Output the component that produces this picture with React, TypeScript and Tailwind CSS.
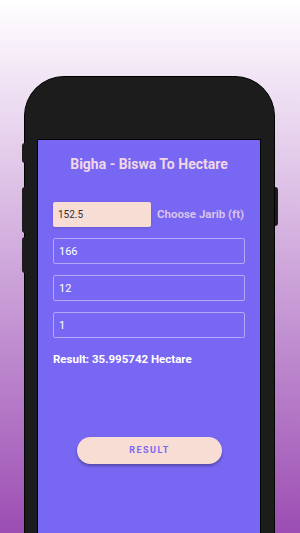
import React, { useState } from "react";

const App: React.FC = () => {
  const [jarib, setJarib] = useState("152.5");
  const [bigha, setBigha] = useState("166");
  const [biswa, setBiswa] = useState("12");
  const [biswansi, setBiswansi] = useState("1");

  return (
    <div
      className="w-[300px] h-[533px] overflow-hidden bg-gradient-to-b from-[#ffffff] to-[#9c4db3]"
      style={{ fontFamily: "Roboto, 'Liberation Sans', sans-serif" }}
    >
      <div className="relative ml-[24px] mt-[76px] w-[251px] h-[500px] rounded-t-[40px] bg-[#1c1c1c] border border-black pt-[62px] pl-[12px] pr-[13px]">
        {/* side buttons */}
        <div className="absolute left-[-3px] top-[66px] w-[3px] h-[20px] bg-[#1c1c1c] rounded-l-sm" />
        <div className="absolute left-[-3px] top-[110px] w-[3px] h-[46px] bg-[#1c1c1c] rounded-l-sm" />
        <div className="absolute left-[-3px] top-[160px] w-[3px] h-[36px] bg-[#1c1c1c] rounded-l-sm" />
        <div className="absolute right-[-4px] top-[110px] w-[3px] h-[39px] bg-[#1c1c1c] rounded-r-sm" />

        <div className="h-full bg-[#7867f2] border-t border-x border-black flex flex-col px-[15px]">
          <h1 className="mt-[14px] text-center text-[14px] font-bold text-[#f1d8e6]">
            Bigha - Biswa To Hectare
          </h1>

          <div className="mt-[27px] flex items-center gap-[6px]">
            <input
              value={jarib}
              onChange={(e) => setJarib(e.target.value)}
              className="w-[98px] h-[25px] shrink-0 rounded-[2px] bg-[#f8ddd5] px-[5px] text-[10px] text-[#333] outline-none shadow-sm"
            />
            <span className="whitespace-nowrap text-[11.5px] font-bold text-[#d9c3ec]">Choose Jarib (ft)</span>
          </div>

          <input
            value={bigha}
            onChange={(e) => setBigha(e.target.value)}
            className="mt-[11px] h-[26px] w-[192px] rounded-[2px] border border-[#b5a8f8] bg-transparent px-[5px] text-[11px] text-white outline-none"
          />
          <input
            value={biswa}
            onChange={(e) => setBiswa(e.target.value)}
            className="mt-[11px] h-[26px] w-[192px] rounded-[2px] border border-[#b5a8f8] bg-transparent px-[5px] text-[11px] text-white outline-none"
          />
          <input
            value={biswansi}
            onChange={(e) => setBiswansi(e.target.value)}
            className="mt-[11px] h-[26px] w-[192px] rounded-[2px] border border-[#b5a8f8] bg-transparent px-[5px] text-[11px] text-white outline-none"
          />

          <p className="mt-[13px] text-[11.5px] font-bold text-white">Result: 35.995742 Hectare</p>

          <button className="mt-[69px] ml-[24px] w-[145px] h-[27px] rounded-full bg-[#f8ddd5] text-[9px] font-bold tracking-[1.5px] text-[#7867f2] shadow-[0_2px_3px_rgba(0,0,0,0.3)]">
            RESULT
          </button>
        </div>
      </div>
    </div>
  );
};

export default App;
